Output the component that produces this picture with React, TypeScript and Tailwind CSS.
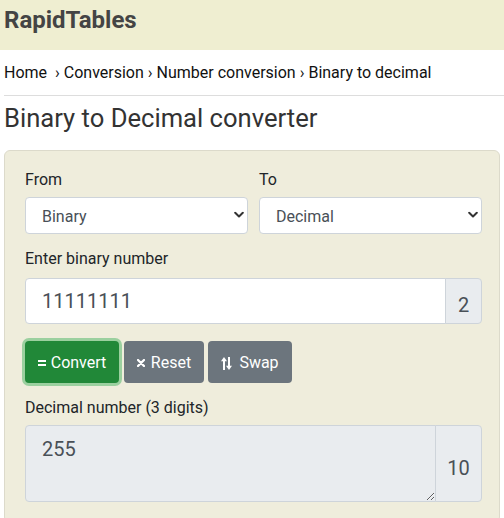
import React from "react";

function Chevron() {
  return (
    <svg className="pointer-events-none absolute right-[4px] top-1/2 -translate-y-1/2" width="10" height="7" viewBox="0 0 10 7">
      <path d="M1.2 1.2 5 5 8.8 1.2" fill="none" stroke="#333" strokeWidth="2" strokeLinecap="round" strokeLinejoin="round" />
    </svg>
  );
}

function EqualsIcon() {
  return (
    <svg width="8" height="6" viewBox="0 0 8 6" className="shrink-0">
      <rect x="0" y="0" width="8" height="2" fill="white" />
      <rect x="0" y="4" width="8" height="2" fill="white" />
    </svg>
  );
}

function XIcon() {
  return (
    <svg width="8" height="8" viewBox="0 0 8 8" className="shrink-0">
      <path d="M1 1 7 7M7 1 1 7" stroke="white" strokeWidth="2.3" strokeLinecap="round" />
    </svg>
  );
}

function SwapIcon() {
  return (
    <svg width="11" height="13" viewBox="0 0 11 13" className="shrink-0">
      <rect x="2" y="3" width="2" height="10" fill="white" />
      <polygon points="0,4.2 3,0 6,4.2" fill="white" />
      <rect x="7" y="0" width="2" height="10" fill="white" />
      <polygon points="5,8.8 8,13 11,8.8" fill="white" />
    </svg>
  );
}

export default function App() {
  return (
    <div className="w-[504px] h-[518px] overflow-hidden bg-white font-['Roboto','Liberation_Sans',sans-serif]">
      {/* header */}
      <header className="h-[50px] bg-[#efeed1] pl-1 pt-[6px]">
        <span className="text-[24px] leading-[28px] font-bold text-[#444]">RapidTables</span>
      </header>

      <div className="pl-1">
        <nav className="pt-[11px] text-[16px] leading-[24px] text-[#111]">
          Home&nbsp; › Conversion › Number conversion › Binary to decimal
        </nav>
        <hr className="mt-[10px] border-t border-[#dddddd]" />
        <h1 className="mt-[7px] text-[25.6px] leading-[30.7px] text-[#333]">Binary to Decimal converter</h1>
      </div>

      {/* converter panel */}
      <div className="mx-1 mt-[16px] rounded-md border border-[#dcdacb] bg-[#efeddc] pl-5 pr-[17px] pt-[17px] pb-5 text-[#212529]">
        <div className="grid grid-cols-2 gap-[11px]">
          <div>
            <label className="block text-[16px] leading-[24px]">From</label>
            <div className="relative mt-[5px]">
              <select
                defaultValue="Binary"
                className="block w-full h-[37px] appearance-none rounded-[4px] border border-[#ced4da] bg-white pl-4 pt-[3px] text-[16px] text-[#495057] outline-none"
              >
                <option>Binary</option>
                <option>Decimal</option>
                <option>Hexadecimal</option>
              </select>
              <Chevron />
            </div>
          </div>
          <div>
            <label className="block text-[16px] leading-[24px]">To</label>
            <div className="relative mt-[5px]">
              <select
                defaultValue="Decimal"
                className="block w-full h-[37px] appearance-none rounded-[4px] border border-[#ced4da] bg-white pl-4 pt-[3px] text-[16px] text-[#495057] outline-none"
              >
                <option>Binary</option>
                <option>Decimal</option>
                <option>Hexadecimal</option>
              </select>
              <Chevron />
            </div>
          </div>
        </div>

        <label className="mt-[13px] block text-[16px] leading-[24px]">Enter binary number</label>
        <div className="mt-[7px] flex h-[46px]">
          <input
            defaultValue="11111111"
            className="min-w-0 flex-1 rounded-l-[4px] border border-[#ced4da] bg-white px-4 text-[20px] text-[#495057] outline-none"
          />
          <div className="-ml-px flex w-[37px] items-center justify-center rounded-r-[4px] border border-[#ced4da] bg-[#e9ecef] pt-[9px] text-[20px] text-[#495057]">
            2
          </div>
        </div>

        <div className="mt-[17px] flex h-[42px]">
          <button className="flex w-[94px] items-center justify-center gap-[5px] rounded-[4px] bg-[#218838] pt-[3px] text-[16px] text-white shadow-[0_0_0_3px_rgba(72,180,97,0.5)]">
            <EqualsIcon />
            <span>Convert</span>
          </button>
          <button className="ml-[5px] flex w-[80px] items-center justify-center gap-[6px] rounded-[4px] bg-[#6c757d] pt-[3px] text-[16px] text-white">
            <XIcon />
            <span>Reset</span>
          </button>
          <button className="ml-1 flex w-[84px] items-center justify-center gap-[7px] rounded-[4px] bg-[#6c757d] pt-[3px] text-[16px] text-white">
            <SwapIcon />
            <span>Swap</span>
          </button>
        </div>

        <label className="mt-[13px] block text-[16px] leading-[24px]">Decimal number (3 digits)</label>
        <div className="mt-[5px] flex h-[77px]">
          <textarea
            readOnly
            defaultValue="255"
            className="min-w-0 flex-1 rounded-l-[4px] border border-[#ced4da] bg-[#e9ecef] px-4 pt-[8px] text-[20px] leading-[30px] text-[#495057] outline-none"
          />
          <div className="-ml-px flex w-[47px] items-center justify-center rounded-r-[4px] border border-[#ced4da] bg-[#e9ecef] pt-[10px] text-[20px] text-[#495057]">
            10
          </div>
        </div>
      </div>
    </div>
  );
}
